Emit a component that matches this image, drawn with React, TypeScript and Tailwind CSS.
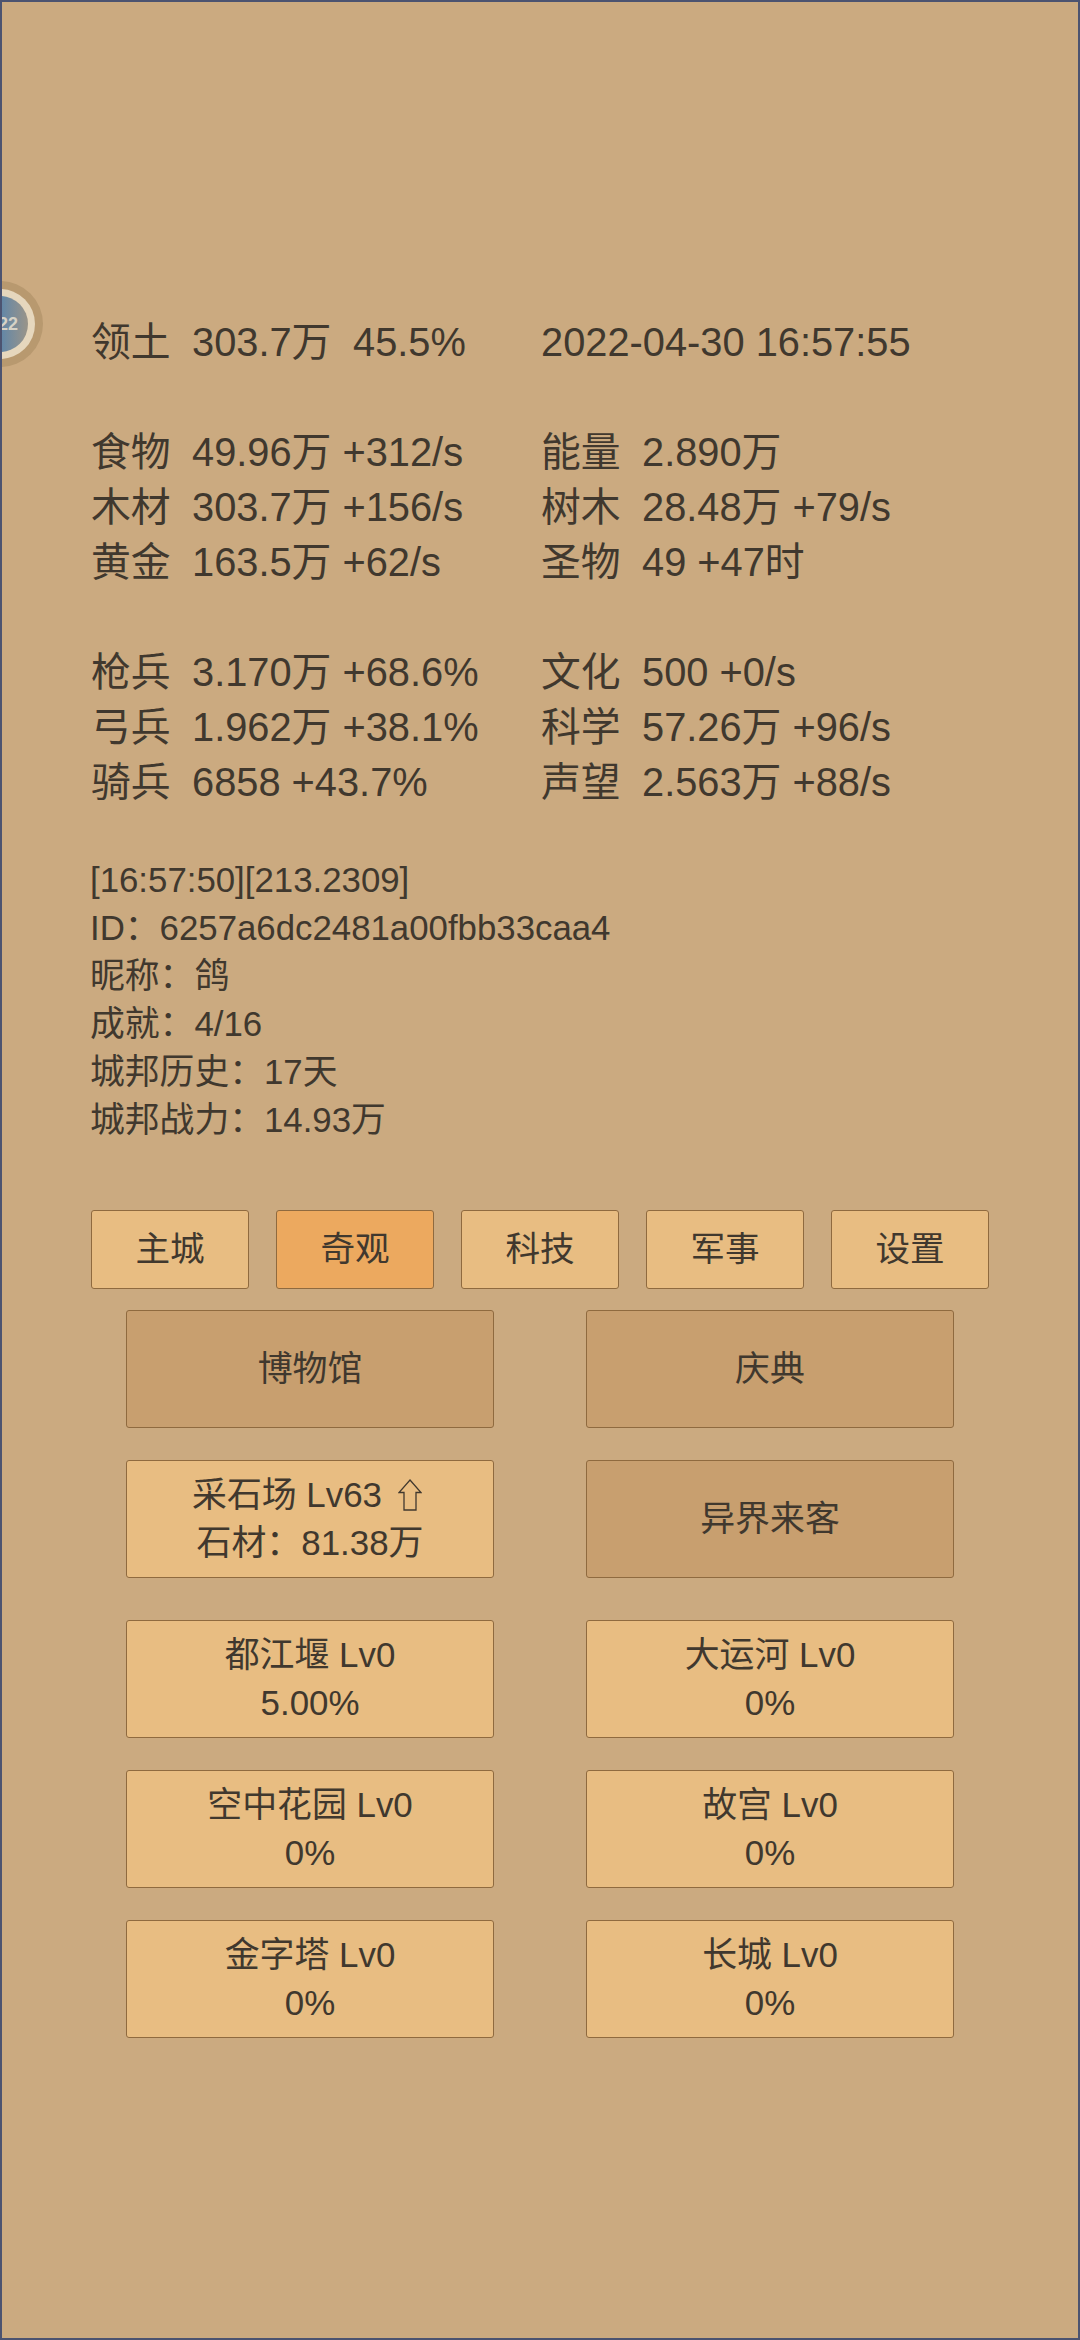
const font = { fontFamily: '"Liberation Sans", "Noto Sans CJK SC", sans-serif' };

const topLeft = [
  { title: "食物", value: "49.96万 +312/s" },
  { title: "木材", value: "303.7万 +156/s" },
  { title: "黄金", value: "163.5万 +62/s" },
];
const topRight = [
  { title: "能量", value: "2.890万" },
  { title: "树木", value: "28.48万 +79/s" },
  { title: "圣物", value: "49 +47时" },
];
const armyLeft = [
  { title: "枪兵", value: "3.170万 +68.6%" },
  { title: "弓兵", value: "1.962万 +38.1%" },
  { title: "骑兵", value: "6858 +43.7%" },
];
const armyRight = [
  { title: "文化", value: "500 +0/s" },
  { title: "科学", value: "57.26万 +96/s" },
  { title: "声望", value: "2.563万 +88/s" },
];

function Stat({ title, value }: { title: string; value: string }) {
  return (
    <div className="flex h-[55px] items-center whitespace-pre">
      <span className="w-[101px]">{title}</span>
      <span>{value}</span>
    </div>
  );
}

function StatGroup({ left, right }: { left: typeof topLeft; right: typeof topLeft }) {
  return (
    <div className="grid grid-cols-[450px_1fr]">
      <div>
        {left.map((s) => (
          <Stat key={s.title} {...s} />
        ))}
      </div>
      <div>
        {right.map((s) => (
          <Stat key={s.title} {...s} />
        ))}
      </div>
    </div>
  );
}

function Tile({ lines, dark }: { lines: React.ReactNode[]; dark?: boolean }) {
  return (
    <div
      className={`flex h-[118px] w-[368px] flex-col items-center justify-center rounded-[3px] border border-[#8f6a3f] text-[34.9px] leading-[48px] text-[#40382e] ${
        dark ? "bg-[#c89f6f]" : "bg-[#e8bd82]"
      }`}
    >
      {lines.map((line, i) => (
        <div key={i} className="flex items-center whitespace-pre">
          {line}
        </div>
      ))}
    </div>
  );
}

export default function App() {
  return (
    <div
      style={font}
      className="relative h-[2340px] w-[1080px] overflow-hidden border-2 border-[#4c5370] bg-[#cbaa80] text-[#40382e]"
    >
      {/* Avatar peeking in from the left edge */}
      <div className="absolute left-[-45px] top-[279px] flex h-[86px] w-[86px] items-center justify-center rounded-full bg-[#b8996f]">
        <div className="flex h-[70px] w-[70px] items-center justify-center rounded-full bg-[#e6d7bd]">
          <div className="flex h-[56px] w-[56px] items-center justify-center rounded-full bg-gradient-to-r from-[#5f86a8] from-50% to-[#9a9488] pl-[16px] text-[18px] font-bold text-[#d6d2c6]">
            22
          </div>
        </div>
      </div>

      <div className="pl-[89px] pt-[311px] text-[39.8px]">
        <div className="grid h-[55px] grid-cols-[450px_1fr] items-center">
          <div className="flex whitespace-pre">
            <span className="w-[101px]">领土</span>
            <span className="w-[161px]">303.7万</span>
            <span>45.5%</span>
          </div>
          <div>2022-04-30 16:57:55</div>
        </div>

        <div className="mt-[57px]">
          <StatGroup left={topLeft} right={topRight} />
        </div>
        <div className="mt-[55px]">
          <StatGroup left={armyLeft} right={armyRight} />
        </div>

        <div className="-ml-px mt-[46px] text-[34.8px] leading-[48px]">
          <div>[16:57:50][213.2309]</div>
          <div>ID：6257a6dc2481a00fbb33caa4</div>
          <div>昵称：鸽</div>
          <div>成就：4/16</div>
          <div>城邦历史：17天</div>
          <div>城邦战力：14.93万</div>
        </div>
      </div>

      <div className="mt-[66px] flex gap-[27px] pl-[89px]">
        {["主城", "奇观", "科技", "军事", "设置"].map((label) => (
          <div
            key={label}
            className={`flex h-[79px] w-[158px] items-center justify-center rounded-[3px] border border-[#8f6a3f] text-[34.6px] ${
              label === "奇观" ? "bg-[#eca95f]" : "bg-[#e8bd82]"
            }`}
          >
            {label}
          </div>
        ))}
      </div>

      <div className="mt-[21px] pl-[124px]">
        <div className="grid w-[828px] grid-cols-[368px_368px] justify-between">
          <Tile dark lines={["博物馆"]} />
          <Tile dark lines={["庆典"]} />
        </div>
        <div className="mt-[32px] grid w-[828px] grid-cols-[368px_368px] justify-between">
          <Tile
            lines={[
              <>
                采石场 Lv63
                <svg className="ml-[16px] mr-[6px]" width="24" height="32" viewBox="0 0 24 32" fill="none" stroke="#40382e" strokeWidth="1.3">
                  <path d="M12 1 L23 13.5 H18 V31 H6 V13.5 H1 Z" />
                </svg>
              </>,
              "石材：81.38万",
            ]}
          />
          <Tile dark lines={["异界来客"]} />
        </div>
        <div className="mt-[42px] grid w-[828px] grid-cols-[368px_368px] justify-between gap-y-[32px]">
          <Tile lines={["都江堰 Lv0", "5.00%"]} />
          <Tile lines={["大运河 Lv0", "0%"]} />
          <Tile lines={["空中花园 Lv0", "0%"]} />
          <Tile lines={["故宫 Lv0", "0%"]} />
          <Tile lines={["金字塔 Lv0", "0%"]} />
          <Tile lines={["长城 Lv0", "0%"]} />
        </div>
      </div>
    </div>
  );
}
